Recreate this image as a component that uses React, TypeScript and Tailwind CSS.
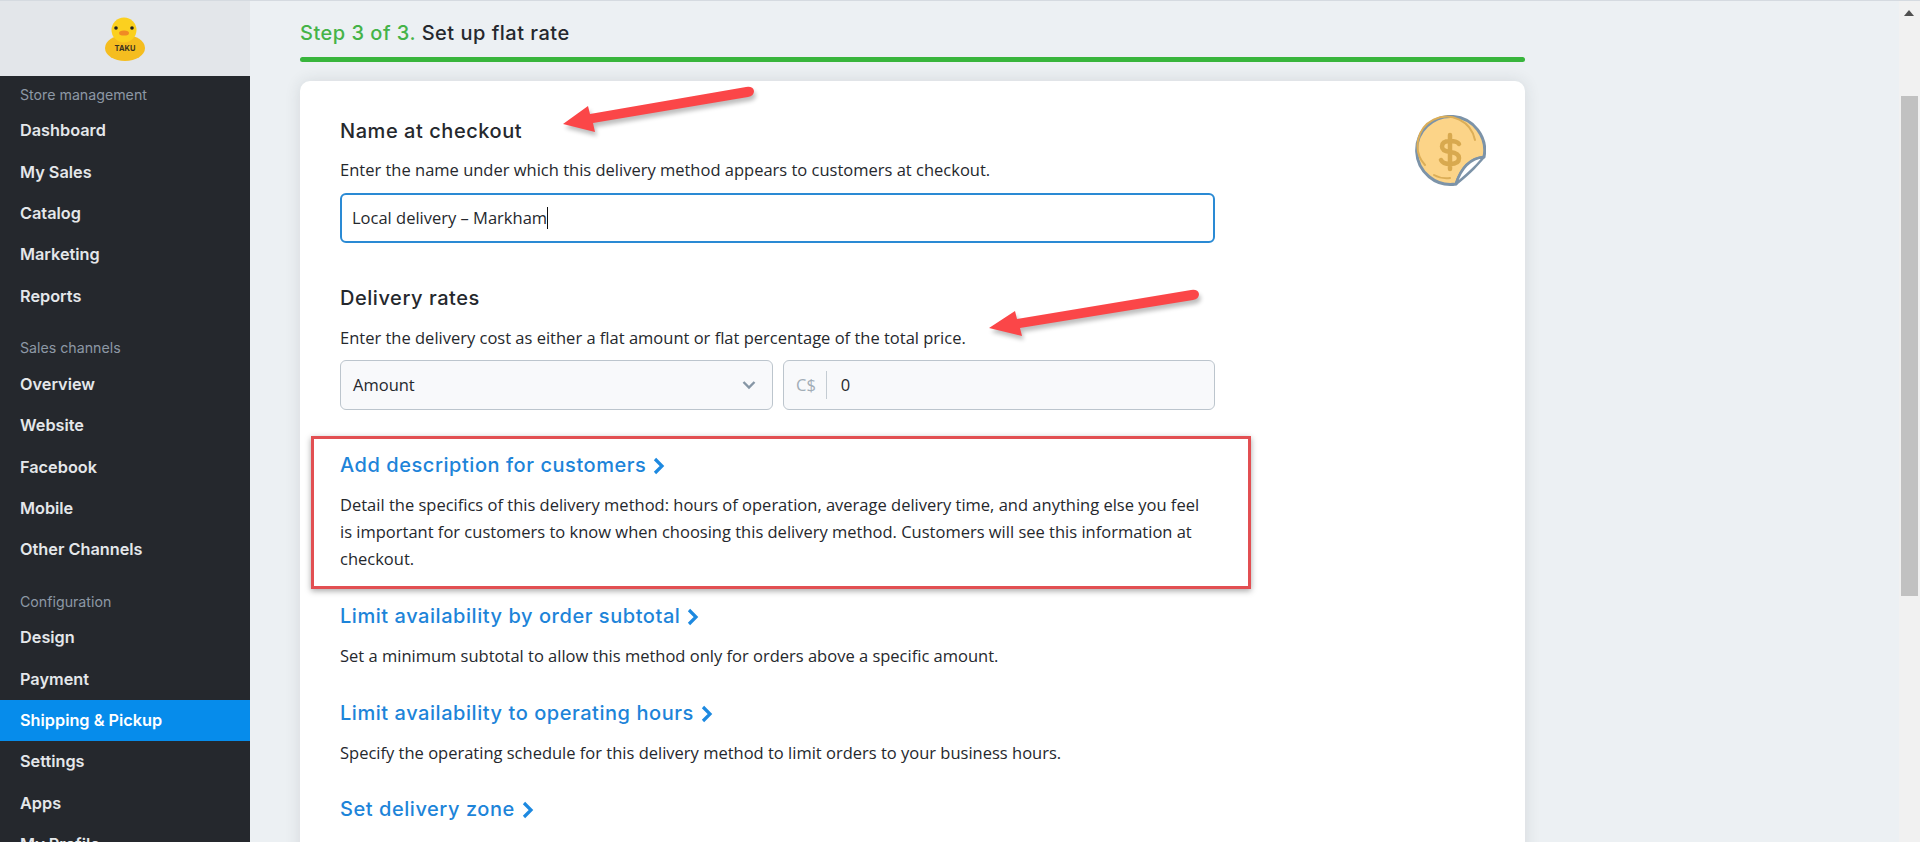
const groups = [
  { title: 'Store management', items: ['Dashboard', 'My Sales', 'Catalog', 'Marketing', 'Reports'] },
  { title: 'Sales channels', items: ['Overview', 'Website', 'Facebook', 'Mobile', 'Other Channels'] },
  { title: 'Configuration', items: ['Design', 'Payment', 'Shipping & Pickup', 'Settings', 'Apps', 'My Profile'] },
];

function Duck() {
  return (
    <svg width="42" height="46" viewBox="0 0 42 46">
      <ellipse cx="21" cy="32" rx="20" ry="13" fill="#f5bd1f" />
      <circle cx="20" cy="14" r="12.5" fill="#fbd01f" />
      <circle cx="12" cy="12" r="1.8" fill="#222" />
      <circle cx="28" cy="12" r="1.8" fill="#222" />
      <ellipse cx="20" cy="17" rx="5" ry="2.6" fill="#f08a24" />
      <text x="21" y="35" textAnchor="middle" fontSize="7.5" fontWeight="700" fill="#3b3320" fontFamily="Inter, sans-serif">TAKU</text>
    </svg>
  );
}

function Coin() {
  return (
    <svg width="72" height="72" viewBox="0 0 72 72">
      <path d="M42 69 A34 34 0 1 1 70 42 Q50 44 42 69 Z" fill="#fcd488" stroke="#7c93a8" strokeWidth="3" strokeLinejoin="round" />
      <path d="M42 69 Q50 44 70 42 Q63 50 60 53 Q53 60 42 69 Z" fill="#fff" stroke="#7c93a8" strokeWidth="2.5" strokeLinejoin="round" />
      <path d="M61 25 A29 29 0 1 0 11 50" fill="none" stroke="#dcae57" strokeWidth="2" strokeLinecap="round" />
      <path d="M20 60 Q27 64 36 63" fill="none" stroke="#dcae57" strokeWidth="2" strokeLinecap="round" />
      <path d="M45 29 Q43 26 36 26 Q28 26 28 31.5 Q28 36 36 37 Q45 38 45 43 Q45 49 36 49 Q29 49 27 45 M36 20 V54" fill="none" stroke="#d8a94f" strokeWidth="4.5" strokeLinecap="round" />
    </svg>
  );
}

function Arrow({ className, width, height, d }: { className: string; width: number; height: number; d: string }) {
  return (
    <svg className={className} width={width} height={height} viewBox={`0 0 ${width} ${height}`}>
      <path d={d} fill="#000" opacity="0.25" transform="translate(2 4)" style={{ filter: 'blur(2px)' }} />
      <path d={d} fill="#fb4648" />
    </svg>
  );
}

function Chevron() {
  return (
    <svg width="12" height="18" viewBox="0 0 12 18" className="ml-[7px] mt-0.5">
      <path d="M2 2 L9 9 L2 16" fill="none" stroke="#1d89e0" strokeWidth="3.2" />
    </svg>
  );
}

function Option({ title, text, className }: { title: string; text?: string; className: string }) {
  return (
    <div className={className}>
      <div className="flex items-center h-6 text-[20px] tracking-[0.55px] font-medium text-[#1d84d9] font-['Inter',sans-serif]">
        {title}
        <Chevron />
      </div>
      <p className="mt-[14px] w-[875px] text-[16.5px] leading-[27px] text-[#25282d]">{text}</p>
    </div>
  );
}

export default function App() {
  return (
    <div className="relative h-[842px] overflow-hidden flex bg-[#ecf0f3] border-t border-[#d5dae0] font-['Open_Sans',sans-serif]">
      <aside className="w-[250px] shrink-0 h-full bg-[#25282d]">
        <div className="h-[75px] bg-[#e3e6ea] flex items-center justify-center pt-[1px] pr-[1px]">
          <Duck />
        </div>
        <nav className="font-['Inter',sans-serif]">
          {groups.map((group) => (
            <div key={group.title} className="mb-[13px]">
              <div className="h-[34px] pt-[9px] px-5 text-[14.2px] leading-[20px] text-[#8d98a5]">{group.title}</div>
              {group.items.map((item) => (
                <div
                  key={item}
                  className={
                    item === 'Shipping & Pickup'
                      ? 'h-[41.3px] px-5 flex items-center text-[16.3px] font-semibold text-white bg-[#068ceb]'
                      : 'h-[41.3px] px-5 flex items-center text-[16.3px] font-semibold text-[#e4e7ea]'
                  }
                >
                  {item}
                </div>
              ))}
            </div>
          ))}
        </nav>
      </aside>

      <main className="flex-1 pl-[50px]">
        <div className="w-[1225px]">
          <div className="h-[56px] pt-[20px] text-[20px] tracking-[0.5px] leading-[24px] font-medium text-[#25282d] font-['Inter',sans-serif]">
            <span className="text-[#45b348]">Step 3 of 3.</span> Set up flat rate
          </div>
          <div className="h-[5px] rounded-full bg-[#38b53c]" />
          <div className="relative mt-[19px] h-[800px] rounded-t-[10px] bg-white pl-10 pt-[38px] shadow-[0_0_16px_rgba(40,50,60,0.12)]">
            <div className="absolute left-[1114px] top-[34px]">
              <Coin />
            </div>
            <h2 className="h-6 text-[20px] tracking-[0.55px] leading-6 font-medium text-[#25282d] font-['Inter',sans-serif]">Name at checkout</h2>
            <p className="mt-[15px] text-[16.5px] leading-6 text-[#25282d]">
              Enter the name under which this delivery method appears to customers at checkout.
            </p>
            <div className="mt-[11px] w-[875px] h-[50px] rounded-md border-2 border-[#2a8ad4] flex items-center px-[10px] text-[16.5px] text-[#25282d]">
              Local delivery – Markham
              <span className="w-px h-[22px] bg-[#111]" />
            </div>

            <h2 className="mt-[43px] h-6 text-[20px] tracking-[0.55px] leading-6 font-medium text-[#25282d] font-['Inter',sans-serif]">Delivery rates</h2>
            <p className="mt-[16px] text-[16.5px] leading-6 text-[#25282d]">
              Enter the delivery cost as either a flat amount or flat percentage of the total price.
            </p>
            <div className="mt-[10px] flex gap-[10px] w-[875px] text-[16.5px] text-[#25282d]">
              <div className="w-[433px] h-[50px] rounded-md border border-[#bcc5cd] bg-[#f8f9fb] flex items-center justify-between pl-3 pr-4">
                Amount
                <svg width="14" height="10" viewBox="0 0 14 10">
                  <path d="M1.5 2 L7 7.5 L12.5 2" fill="none" stroke="#8696a5" strokeWidth="2.4" />
                </svg>
              </div>
              <div className="flex-1 h-[50px] rounded-md border border-[#bcc5cd] bg-[#f8f9fb] flex items-center pl-3">
                <span className="text-[#a2adb7] pr-[10px] border-r border-[#c4ccd3] leading-[28px]">C$</span>
                <span className="pl-[14px]">0</span>
              </div>
            </div>

            <Option
              className="mt-[43px]"
              title="Add description for customers"
              text="Detail the specifics of this delivery method: hours of operation, average delivery time, and anything else you feel is important for customers to know when choosing this delivery method. Customers will see this information at checkout."
            />
            <Option
              className="mt-[32px]"
              title="Limit availability by order subtotal"
              text="Set a minimum subtotal to allow this method only for orders above a specific amount."
            />
            <Option
              className="mt-[32px]"
              title="Limit availability to operating hours"
              text="Specify the operating schedule for this delivery method to limit orders to your business hours."
            />
            <Option className="mt-[31px]" title="Set delivery zone" />
          </div>
        </div>
      </main>

      <div className="relative w-[21px] shrink-0 bg-[#f1f1f1]">
        <svg className="absolute left-[5px] top-[9px]" width="10" height="6" viewBox="0 0 10 6">
          <path d="M5 0 L10 6 H0 Z" fill="#505050" />
        </svg>
        <div className="absolute left-[2px] right-[2px] top-[95px] h-[500px] bg-[#c1c1c1]" />
      </div>

      <Arrow
        className="absolute left-[560px] top-[82px] pointer-events-none"
        width={200}
        height={60}
        d="M3 41 L28 23 L30 31 L186 4 Q193 3 194 8 Q194 13 188 14 L33 40 L35 49 Z"
      />
      <Arrow
        className="absolute left-[985px] top-[286px] pointer-events-none"
        width={220}
        height={60}
        d="M4 41 L30 24 L32 32 L206 3 Q213 2 214 7 Q214 12 208 13 L35 41 L37 49 Z"
      />
      <div className="absolute left-[311px] top-[435px] w-[940px] h-[153px] border-[3px] border-[#e24f52] shadow-[0_2px_6px_rgba(0,0,0,0.35)] pointer-events-none" />
    </div>
  );
}
